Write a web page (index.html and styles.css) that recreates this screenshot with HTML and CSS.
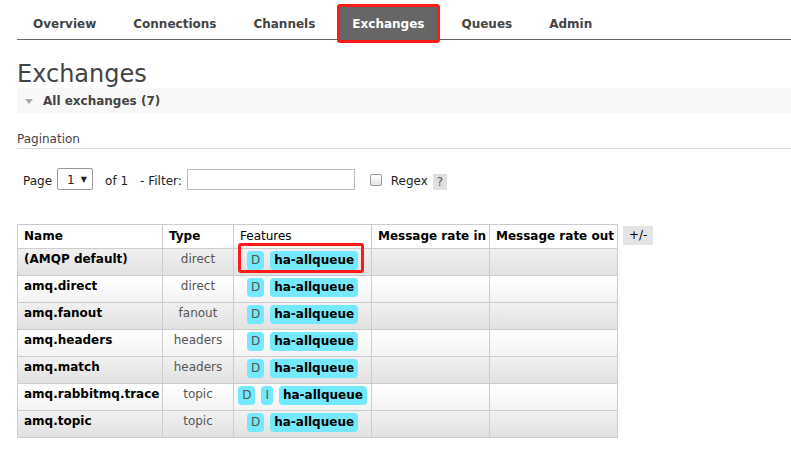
FILE: index.html
```html
<!DOCTYPE html>
<html>
<head>
<meta charset="utf-8">
<title>Exchanges</title>
<link rel="stylesheet" href="styles.css">
</head>
<body>
<div class="page">
  <nav class="tabs">
    <a class="tab">Overview</a>
    <a class="tab">Connections</a>
    <a class="tab">Channels</a>
    <a class="tab active">Exchanges<span class="mark mark-tab"></span></a>
    <a class="tab">Queues</a>
    <a class="tab">Admin</a>
  </nav>

  <h1>Exchanges</h1>
  <div class="section-head"><span class="tri tri-down"></span>All exchanges (7)</div>

  <div class="pagination-label">Pagination</div>
  <div class="controls">
    <span class="lbl lbl-page">Page</span>
    <span class="select"><span class="select-val">1</span><span class="select-arrow">▼</span></span>
    <span class="lbl lbl-of">of 1</span>
    <span class="lbl lbl-filter">- Filter:</span>
    <span class="input"></span>
    <span class="checkbox"></span>
    <span class="lbl lbl-regex">Regex</span>
    <span class="help">?</span>
  </div>

  <div class="table-wrap">
    <table class="list">
      <thead>
        <tr>
          <th class="c-name">Name</th>
          <th class="c-type">Type</th>
          <th class="c-feat plain">Features</th>
          <th class="c-in">Message rate in</th>
          <th class="c-out">Message rate out</th>
        </tr>
      </thead>
      <tbody>
        <tr class="alt1">
          <td class="name">(AMQP default)</td>
          <td class="type">direct</td>
          <td class="feat"><div class="feats"><span class="badge">D</span><span class="badge policy">ha-allqueue</span></div><span class="mark mark-cell"></span></td>
          <td></td><td></td>
        </tr>
        <tr class="alt2">
          <td class="name">amq.direct</td>
          <td class="type">direct</td>
          <td class="feat"><div class="feats"><span class="badge">D</span><span class="badge policy">ha-allqueue</span></div></td>
          <td></td><td></td>
        </tr>
        <tr class="alt1">
          <td class="name">amq.fanout</td>
          <td class="type">fanout</td>
          <td class="feat"><div class="feats"><span class="badge">D</span><span class="badge policy">ha-allqueue</span></div></td>
          <td></td><td></td>
        </tr>
        <tr class="alt2">
          <td class="name">amq.headers</td>
          <td class="type">headers</td>
          <td class="feat"><div class="feats"><span class="badge">D</span><span class="badge policy">ha-allqueue</span></div></td>
          <td></td><td></td>
        </tr>
        <tr class="alt1">
          <td class="name">amq.match</td>
          <td class="type">headers</td>
          <td class="feat"><div class="feats"><span class="badge">D</span><span class="badge policy">ha-allqueue</span></div></td>
          <td></td><td></td>
        </tr>
        <tr class="alt2">
          <td class="name">amq.rabbitmq.trace</td>
          <td class="type">topic</td>
          <td class="feat"><div class="feats"><span class="badge">D</span><span class="badge">I</span><span class="badge policy">ha-allqueue</span></div></td>
          <td></td><td></td>
        </tr>
        <tr class="alt1">
          <td class="name">amq.topic</td>
          <td class="type">topic</td>
          <td class="feat"><div class="feats"><span class="badge">D</span><span class="badge policy">ha-allqueue</span></div></td>
          <td></td><td></td>
        </tr>
      </tbody>
    </table>
    <span class="toggle">+/-</span>
  </div>

  <div class="section-head section-add"><span class="tri tri-right"></span>Add a new exchange</div>
</div>
</body>
</html>
```

FILE: styles.css
```css
html, body {
  margin: 0;
  padding: 0;
  background: #fff;
}
body {
  font-family: "DejaVu Sans", Verdana, sans-serif;
  font-size: 12px;
  color: #222;
}
.page {
  padding-left: 17px;
}

/* nav */
.tabs {
  display: flex;
  gap: 11px;
  padding: 5px 0 0 3px;
  border-bottom: 1px solid #666;
}
.tab {
  position: relative;
  padding: 4px 13px 0;
  line-height: 30px;
  font-weight: bold;
  color: #444;
  white-space: nowrap;
}
.tab.active {
  background: #666;
  color: #fff;
}
.mark {
  position: absolute;
  border: 3px solid #ff1a1a;
  border-radius: 3px;
  pointer-events: none;
}
.mark-tab {
  left: -2px;
  right: -3px;
  top: -1px;
  bottom: -4px;
}

/* heading */
h1 {
  margin: 21px 0 0;
  font-size: 24px;
  line-height: 27px;
  font-weight: normal;
  color: #444;
}
.section-head {
  display: flex;
  align-items: center;
  height: 25px;
  background: #f8f8f8;
  font-weight: bold;
  color: #444;
  padding-left: 8px;
}
.tri {
  display: inline-block;
  width: 0;
  height: 0;
  margin-right: 10px;
}
.tri-down {
  border-left: 4.5px solid transparent;
  border-right: 4.5px solid transparent;
  border-top: 5px solid #aaa;
  margin-top: 1px;
}
.tri-right {
  border-top: 4.5px solid transparent;
  border-bottom: 4.5px solid transparent;
  border-left: 5px solid #aaa;
  margin-left: 2px;
  margin-right: 11px;
}
.section-add {
  margin-top: 17px;
  background: transparent;
}

/* pagination */
.pagination-label {
  margin-top: 18px;
  line-height: 16px;
  padding-bottom: 1px;
  color: #444;
  border-bottom: 1px solid #ddd;
}
.controls {
  display: flex;
  align-items: center;
  height: 22px;
  margin-top: 19px;
  color: #222;
}
.lbl {
  line-height: 16px;
  margin-top: 3px;
  white-space: nowrap;
}
.lbl-page { margin-left: 6px; }
.select {
  display: flex;
  align-items: center;
  box-sizing: border-box;
  width: 36px;
  height: 22px;
  margin-left: 5px;
  border: 1px solid #999;
  border-radius: 2px;
  background: #fff;
}
.select-val {
  margin-left: 9px;
  margin-top: 1px;
}
.select-arrow {
  font-size: 8px;
  margin-left: 6px;
  color: #222;
}
.lbl-of { margin-left: 12px; }
.lbl-filter { margin-left: 12px; }
.input {
  box-sizing: border-box;
  width: 168px;
  height: 21px;
  margin-left: 5px;
  border: 1px solid #bbb;
  background: #fff;
}
.checkbox {
  box-sizing: border-box;
  width: 12px;
  height: 12px;
  margin-left: 15px;
  margin-top: 1px;
  border: 1px solid #999;
  border-radius: 2px;
  background: linear-gradient(#fff, #e2e2e2);
}
.lbl-regex { margin-left: 9px; margin-top: 4px; }
.help {
  align-self: flex-end;
  width: 14px;
  height: 16px;
  line-height: 16px;
  margin-left: 5px;
  text-align: center;
  background: #e0e0e0;
  color: #555;
}

/* table */
.table-wrap {
  display: flex;
  align-items: flex-start;
  gap: 5px;
  margin-top: 34px;
}
table.list {
  table-layout: fixed;
  border-collapse: separate;
  border-spacing: 0;
  width: 601px;
  border-top: 1px solid #ccc;
  border-left: 1px solid #ccc;
}
table.list th,
table.list td {
  box-sizing: border-box;
  border-right: 1px solid #ccc;
  border-bottom: 1px solid #ccc;
  vertical-align: top;
  text-align: left;
  padding: 0 6px;
}
table.list th {
  padding-top: 3px;
  padding-bottom: 4px;
  line-height: 16px;
  font-weight: bold;
  color: #000;
  background: #fff;
  white-space: nowrap;
}
table.list th.plain {
  font-weight: normal;
}
.c-name { width: 145px; }
.c-type { width: 71px; }
.c-feat { width: 138px; }
.c-in { width: 118px; }
.c-out { width: 128px; }

table.list td {
  height: 27px;
  padding-top: 2px;
  line-height: 16px;
}
table.list tr.alt1 td {
  background: linear-gradient(#f1f1f1, #e1e1e1);
}
table.list tr.alt2 td {
  background: linear-gradient(#ffffff, #f3f3f3);
}
table.list td.name {
  font-weight: bold;
  color: #000;
  white-space: nowrap;
}
table.list td.type {
  text-align: center;
  color: #555;
}
table.list td.feat {
  position: relative;
  padding: 2px 0 0;
}
.feats {
  display: flex;
  justify-content: center;
  gap: 6px;
  white-space: nowrap;
}
.badge {
  display: inline-block;
  padding: 2px 4px;
  line-height: 15px;
  border-radius: 4px;
  background: #74e8fc;
  color: #555;
  white-space: nowrap;
  flex: none;
}
.badge.policy {
  font-weight: bold;
  color: #000;
}
.mark-cell {
  left: 4px;
  right: 7px;
  top: -6px;
  bottom: 2px;
}
.toggle {
  margin-top: 2px;
  padding: 0 6px;
  line-height: 19px;
  background: #e4e4e4;
  color: #000;
}
```
